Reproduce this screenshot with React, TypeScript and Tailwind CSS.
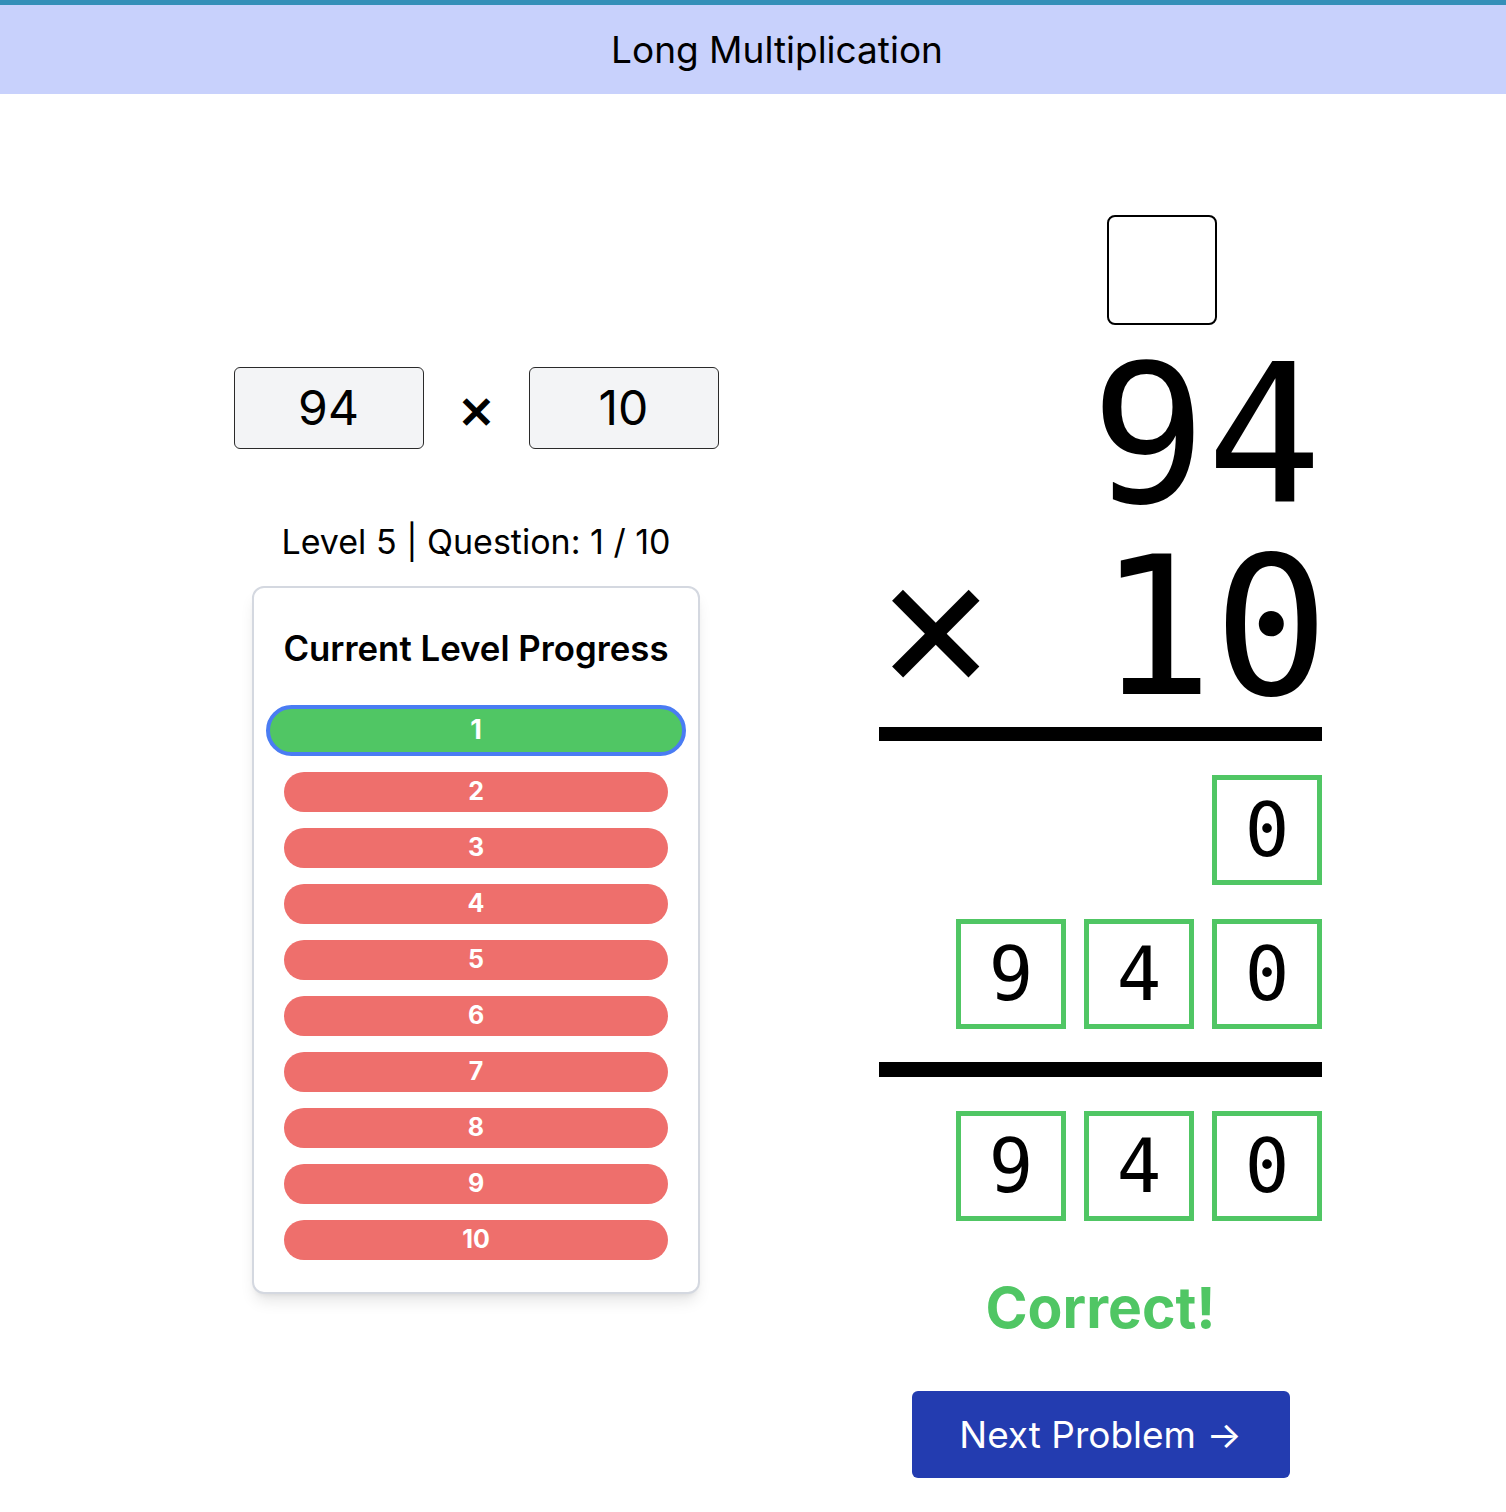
import React from 'react';

const SANS = "font-['Inter','Noto_Sans',sans-serif]";
const MONO = "font-['DejaVu_Sans_Mono','Liberation_Mono',monospace]";

function DigitBox({ value }: { value: string }) {
  return (
    <div
      className={`flex h-[110px] w-[110px] items-center justify-center border-[5px] border-[#50c664] text-[74px] leading-none text-black ${MONO}`}
    >
      {value}
    </div>
  );
}

function ProgressPill({ n, current }: { n: number; current: boolean }) {
  if (current) {
    return (
      <div className="flex h-[51px] w-[420px] items-center justify-center rounded-full border-4 border-[#4a7cf3] bg-[#50c664] text-[27px] font-bold text-white">
        {n}
      </div>
    );
  }
  return (
    <div className="flex h-10 w-[384px] items-center justify-center rounded-full bg-[#ee6f6c] text-[25px] font-bold text-white">
      {n}
    </div>
  );
}

export default function App() {
  const questions = [1, 2, 3, 4, 5, 6, 7, 8, 9, 10];

  return (
    <div className={`min-h-screen w-full bg-white text-black ${SANS}`}>
      <header className="flex h-[94px] items-center justify-center border-t-[5px] border-[#348fb8] bg-[#c8d1fc] pl-[48px]">
        <h1 className="text-[37px] font-normal leading-none">Long Multiplication</h1>
      </header>

      <main className="flex">
        {/* left: problem + progress */}
        <div className="ml-[252px] flex w-[448px] flex-col items-center pt-[273px]">
          <div className="flex items-center gap-[34px]">
            <div className="flex h-[82px] w-[190px] items-center justify-center rounded-md border-[1.5px] border-[#2a2a2a] bg-[#f3f4f6] text-[48px]">
              94
            </div>
            <span className="pt-[8px] text-[44px] font-bold leading-none">✕</span>
            <div className="flex h-[82px] w-[190px] items-center justify-center rounded-md border-[1.5px] border-[#2a2a2a] bg-[#f3f4f6] text-[48px]">
              10
            </div>
          </div>

          <p className="mt-[76px] text-[34px] leading-none">Level 5 | Question: 1 / 10</p>

          <div className="mt-[27px] flex w-[448px] flex-col items-center rounded-xl border-2 border-[#d4d8e0] bg-white px-8 pb-8 pt-[38px] shadow-lg">
            <h2 className="-mx-4 h-[44px] whitespace-nowrap text-[34.8px] font-semibold leading-[44px]">Current Level Progress</h2>
            <div className="mt-[35px] flex flex-col items-center gap-4">
              {questions.map((n) => (
                <ProgressPill key={n} n={n} current={n === 1} />
              ))}
            </div>
          </div>
        </div>

        {/* right: long multiplication */}
        <div className="ml-[179px] flex w-[443px] flex-col pt-[121px]">
          <div className="flex justify-end pr-[105px]">
            <div className="h-[110px] w-[110px] rounded-lg border-2 border-black" />
          </div>

          <div className={`mt-[15px] h-[192px] text-right text-[192px] leading-none ${MONO}`}>94</div>
          <div className={`flex h-[192px] items-start justify-between text-[192px] leading-none ${MONO} -ml-[1px] -mr-[7px]`}>
            <span>×</span>
            <span>10</span>
          </div>

          <div className="mt-[3px] h-[14px] w-full bg-black" />

          <div className="mt-[34px] flex justify-end gap-[18px]">
            <DigitBox value="0" />
          </div>
          <div className="mt-[34px] flex justify-end gap-[18px]">
            <DigitBox value="9" />
            <DigitBox value="4" />
            <DigitBox value="0" />
          </div>

          <div className="mt-[33px] h-[15px] w-full bg-black" />

          <div className="mt-[34px] flex justify-end gap-[18px]">
            <DigitBox value="9" />
            <DigitBox value="4" />
            <DigitBox value="0" />
          </div>

          <p className="mt-[52px] text-center text-[57px] font-bold leading-[70px] text-[#50c664]">Correct!</p>

          <div className="mt-[48px] flex justify-center">
            <button className="flex h-[87px] w-[378px] items-center justify-center rounded-md bg-[#233cb0] text-[37px] text-white">
              Next Problem →
            </button>
          </div>
        </div>
      </main>
    </div>
  );
}
